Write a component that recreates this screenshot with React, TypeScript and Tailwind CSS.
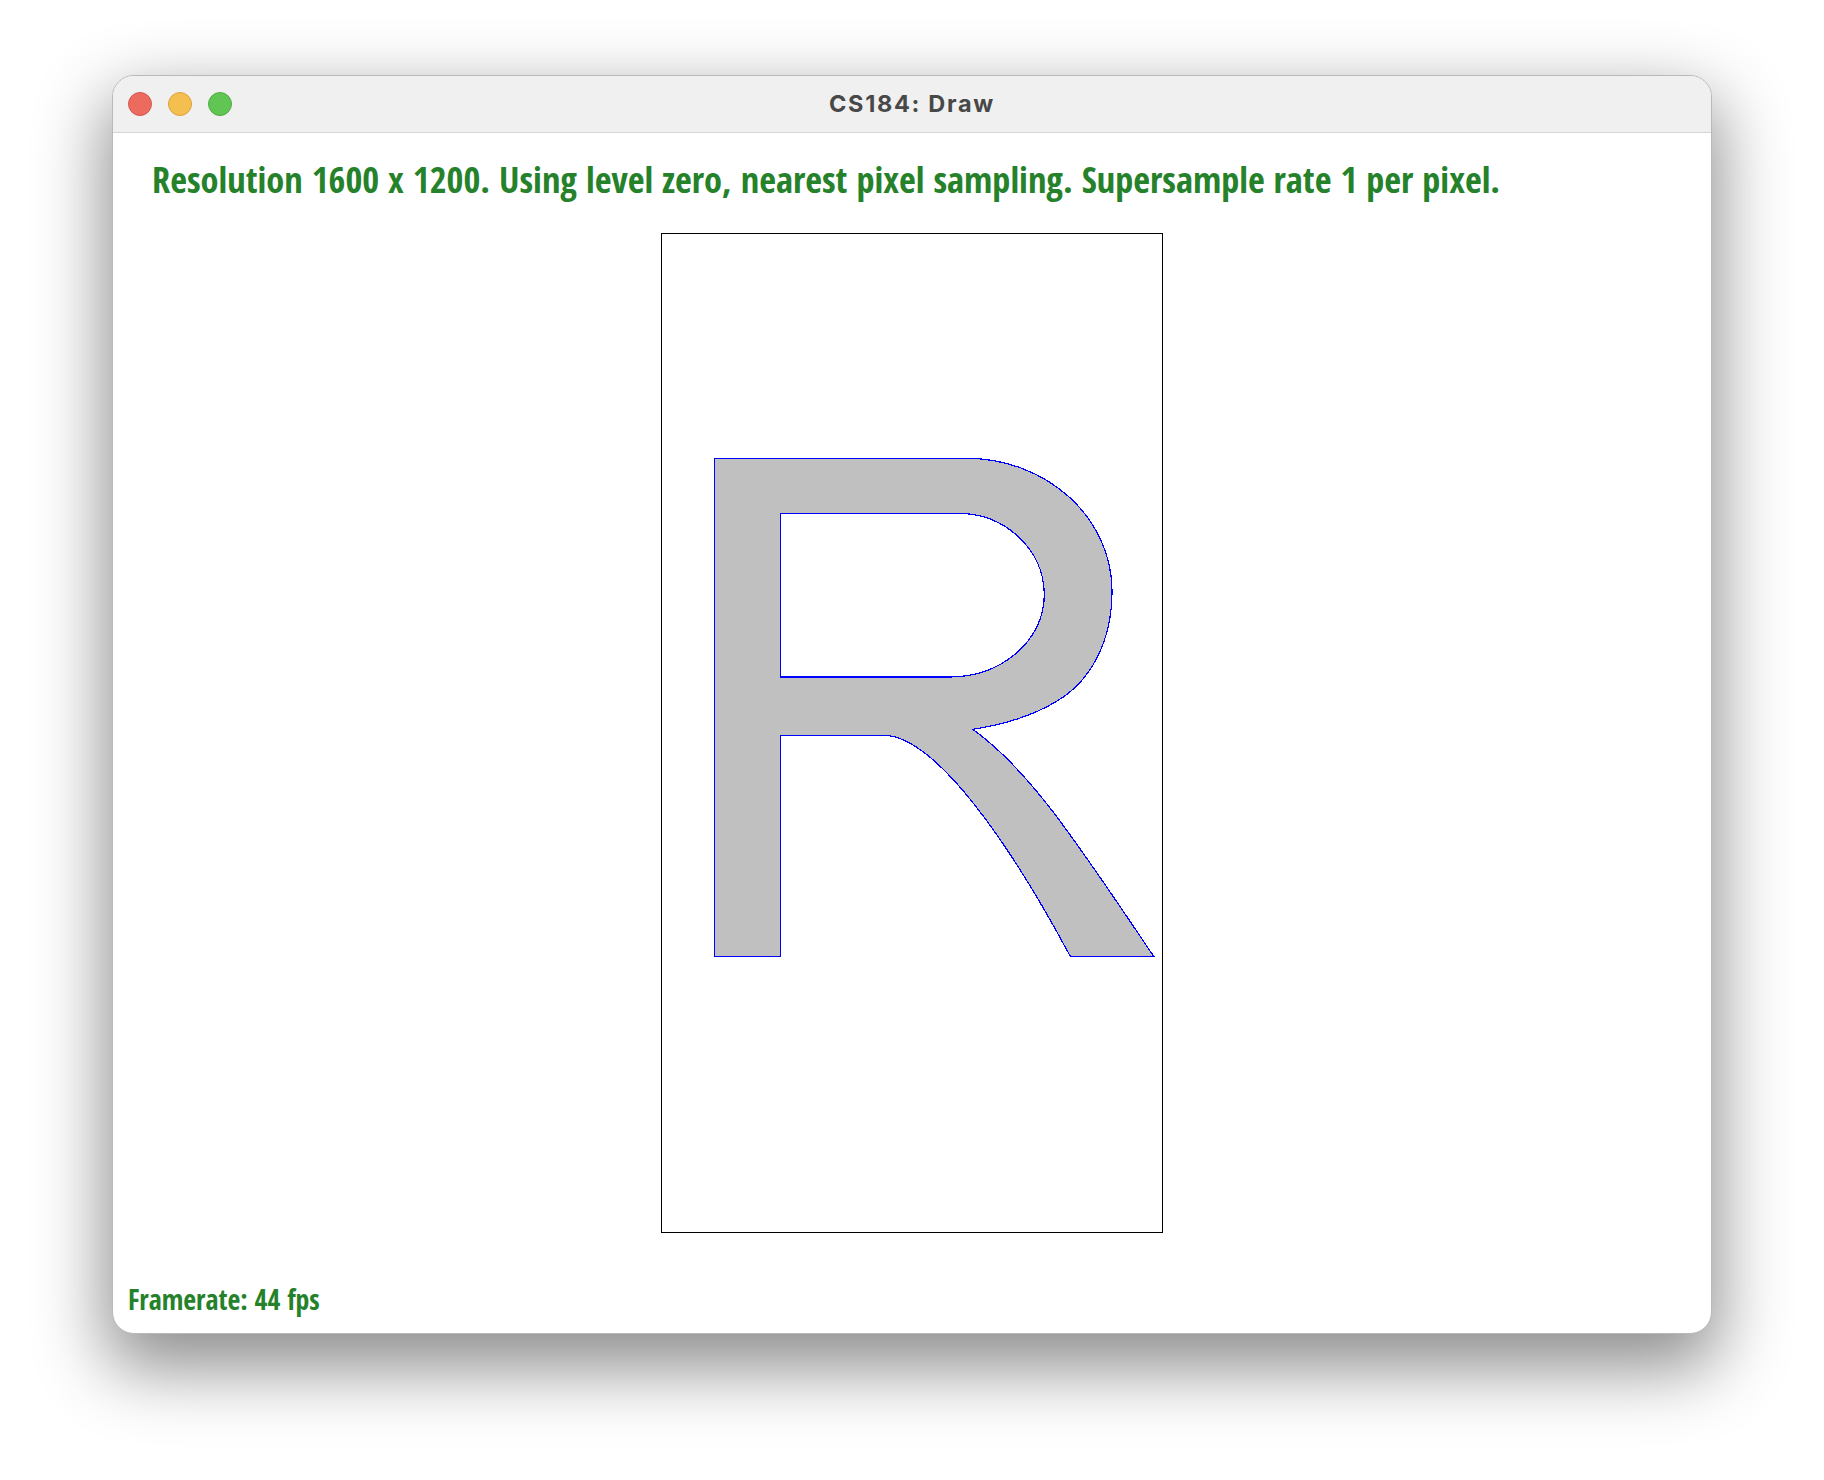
import React from 'react';

const TrafficLight = ({ color, ring }: { color: string; ring: string }) => (
  <div className={`w-[24px] h-[24px] rounded-full border ${color} ${ring}`} />
);

const LetterR = () => (
  <svg
    className="absolute left-0 top-0"
    width={500}
    height={998}
    viewBox="661 233 500 998"
    shapeRendering="crispEdges"
  >
    <path
      fillRule="evenodd"
      fill="#c0c0c0"
      stroke="#0000ff"
      strokeWidth={1.2}
      d="M713.3 457.3 H965 C1045.6 457.3 1111 516.5 1111 590 C1111 640 1090 680 1056 700 C1030 716 1000 724 971.7 728.3 C1030 770 1078 845 1152.7 955.3 H1069.3 C1010 845 935 734.3 882.3 734.3 H779.3 V955.3 H713.3 Z M779.3 512.3 H956.7 C1004.5 512.3 1043.3 548.9 1043.3 594 C1043.3 639.3 1000.8 676 948.3 676 H779.3 Z"
    />
  </svg>
);

export default function App() {
  return (
    <div className="w-[1824px] h-[1480px] bg-white pl-[112px] pt-[75px]">
      {/* Window */}
      <div className="w-[1600px] rounded-[22px] overflow-hidden bg-white border border-[#b9b9b9] shadow-[0_28px_70px_6px_rgba(0,0,0,0.45)]">
        {/* Title bar */}
        <div className="relative h-[57px] bg-[#f0f0f0] border-b border-[#d5d5d5] flex items-center">
          <div className="flex items-center gap-[16px] pl-[15px]">
            <TrafficLight color="bg-[#ed6a5e]" ring="border-[#d4574c]" />
            <TrafficLight color="bg-[#f5bf4f]" ring="border-[#d9a33b]" />
            <TrafficLight color="bg-[#61c554]" ring="border-[#4fad43]" />
          </div>
          <div className="absolute inset-0 flex items-center justify-center pointer-events-none">
            <span className="font-['Inter','Liberation_Sans',sans-serif] font-bold text-[23.5px] text-[#484848] tracking-[1.7px]">
              CS184: Draw
            </span>
          </div>
        </div>

        {/* Content */}
        <div className="h-[1200px] flex flex-col font-['Open_Sans_Condensed','Open_Sans',sans-serif] font-stretch-condensed font-bold text-[#25822b]">
          <div className="pl-[39px] pt-[21px] h-[100px] text-[36.4px] leading-[50px]">
            Resolution 1600 x 1200. Using level zero, nearest pixel sampling. Supersample rate 1 per pixel.
          </div>

          <div className="ml-[548px] relative w-[502px] h-[1000px] border border-black">
            <LetterR />
          </div>

          <div className="flex-1 flex items-end pl-[15px] pb-[14px] text-[27.8px] leading-[40px]">
            Framerate: 44 fps
          </div>
        </div>
      </div>
    </div>
  );
}
